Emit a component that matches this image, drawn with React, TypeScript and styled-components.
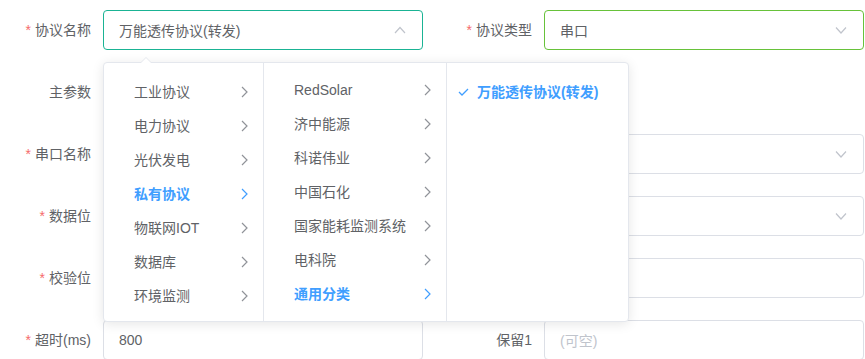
import React from 'react';
import styled, { createGlobalStyle } from 'styled-components';

interface Field {
  label: string;
  required?: boolean;
  value?: string;
  placeholder?: string;
  select?: boolean;
  open?: boolean;
  accent?: string;
  empty?: boolean;
}

const fields: Field[] = [
  { label: '协议名称', required: true, value: '万能透传协议(转发)', select: true, open: true, accent: '#1ab394' },
  { label: '协议类型', required: true, value: '串口', select: true, accent: '#67c23a' },
  { label: '主参数', empty: true },
  { label: '', empty: true },
  { label: '串口名称', required: true, select: true },
  { label: '波特率', required: true, select: true },
  { label: '数据位', required: true, select: true },
  { label: '停止位', required: true, select: true },
  { label: '校验位', required: true, select: true },
  { label: '地址', required: true },
  { label: '超时(ms)', required: true, value: '800' },
  { label: '保留1', placeholder: '(可空)' },
];

const level1 = ['工业协议', '电力协议', '光伏发电', '私有协议', '物联网IOT', '数据库', '环境监测'];
const level2 = ['RedSolar', '济中能源', '科诺伟业', '中国石化', '国家能耗监测系统', '电科院', '通用分类'];

function Chevron(props: { dir: 'up' | 'down' | 'right'; color?: string }) {
  const color = props.color || '#c0c4cc';
  if (props.dir === 'right') {
    return (
      <svg width='7' height='12' viewBox='0 0 7 12'>
        <polyline points='1,1 6,6 1,11' fill='none' stroke={color} strokeWidth='1.2' />
      </svg>
    );
  }
  const pts = props.dir === 'up' ? '1,7 6,1.5 11,7' : '1,1.5 6,7 11,1.5';
  return (
    <svg width='12' height='8' viewBox='0 0 12 8'>
      <polyline points={pts} fill='none' stroke={color} strokeWidth='1.2' />
    </svg>
  );
}

function App() {
  return (
    <Page>
      <GlobalStyle />
      <Form>
        {fields.map(function (f, i) {
          return (
            <FormItem key={i}>
              <Label>
                {f.required && <Star>*</Star>}
                {f.label}
              </Label>
              {!f.empty && (
                <InputBox accent={f.accent}>
                  {f.value ? <Value>{f.value}</Value> : <Placeholder>{f.placeholder}</Placeholder>}
                  {f.select && (
                    <Suffix>
                      <Chevron dir={f.open ? 'up' : 'down'} />
                    </Suffix>
                  )}
                </InputBox>
              )}
            </FormItem>
          );
        })}
      </Form>

      <Popper>
        <Arrow />
        <Menu width={160} offset={12}>
          {level1.map(function (t, i) {
            const active = i === 3;
            return (
              <Node key={t} active={active}>
                <span>{t}</span>
                <Postfix>
                  <Chevron dir='right' color={active ? '#409eff' : '#909399'} />
                </Postfix>
              </Node>
            );
          })}
        </Menu>
        <Menu width={183} offset={10}>
          {level2.map(function (t, i) {
            const active = i === 6;
            return (
              <Node key={t} active={active}>
                <span>{t}</span>
                <Postfix>
                  <Chevron dir='right' color={active ? '#409eff' : '#909399'} />
                </Postfix>
              </Node>
            );
          })}
        </Menu>
        <Menu width={181} offset={12} last>
          <Node active>
            <Check>
              <svg width='11' height='8' viewBox='0 0 11 8'>
                <polyline points='1,4 4,7 10,1' fill='none' stroke='#409eff' strokeWidth='1.3' />
              </svg>
            </Check>
            <span>万能透传协议(转发)</span>
          </Node>
        </Menu>
      </Popper>
    </Page>
  );
}

export default App;

const GlobalStyle = createGlobalStyle({
  body: {
    margin: 0,
    background: '#ffffff',
    fontFamily: '"Liberation Sans", "Noto Sans CJK SC", sans-serif',
    fontSize: 14,
    color: '#606266',
  },
});

const Page = styled.div({
  position: 'relative',
  width: 865,
  height: 359,
  overflow: 'hidden',
  paddingTop: 10,
  boxSizing: 'border-box',
});

const Form = styled.div({
  display: 'grid',
  gridTemplateColumns: '423px 423px',
  columnGap: 18,
  rowGap: 22,
});

const FormItem = styled.div({
  display: 'flex',
  height: 40,
});

const Label = styled.label({
  width: 103,
  flexShrink: 0,
  paddingRight: 12,
  boxSizing: 'border-box',
  textAlign: 'right',
  lineHeight: '40px',
  color: '#606266',
  whiteSpace: 'nowrap',
});

const Star = styled.span({
  color: '#f56c6c',
  marginRight: 4,
});

const InputBox = styled.div<{ accent?: string }>((p) => ({
  position: 'relative',
  width: 320,
  height: 40,
  boxSizing: 'border-box',
  border: `1px solid ${p.accent || '#dcdfe6'}`,
  borderRadius: 4,
  padding: '0 15px',
  display: 'flex',
  alignItems: 'center',
}));

const Value = styled.span({
  color: '#606266',
});

const Placeholder = styled.span({
  color: '#c0c4cc',
});

const Suffix = styled.span({
  marginLeft: 'auto',
  marginRight: 1,
  display: 'flex',
});

const Popper = styled.div({
  position: 'absolute',
  left: 103,
  top: 62,
  display: 'flex',
  height: 260,
  boxSizing: 'border-box',
  background: '#ffffff',
  border: '1px solid #e4e7ed',
  borderRadius: 4,
  boxShadow: '0 2px 12px 0 rgba(0, 0, 0, 0.1)',
});

const Arrow = styled.div({
  position: 'absolute',
  top: -6,
  left: 36,
  width: 0,
  height: 0,
  borderLeft: '6px solid transparent',
  borderRight: '6px solid transparent',
  borderBottom: '6px solid #e4e7ed',
  '&::after': {
    content: '""',
    position: 'absolute',
    left: -5,
    top: 1,
    borderLeft: '5px solid transparent',
    borderRight: '5px solid transparent',
    borderBottom: '5px solid #ffffff',
  },
});

const Menu = styled.div<{ width: number; offset: number; last?: boolean }>((p) => ({
  width: p.width,
  boxSizing: 'border-box',
  paddingTop: p.offset,
  borderRight: p.last ? 'none' : '1px solid #e4e7ed',
}));

const Node = styled.div<{ active?: boolean }>((p) => ({
  position: 'relative',
  height: 34,
  lineHeight: '34px',
  display: 'flex',
  alignItems: 'center',
  padding: '0 15px 0 30px',
  whiteSpace: 'nowrap',
  color: p.active ? '#409eff' : '#606266',
  fontWeight: p.active ? 700 : 400,
}));

const Postfix = styled.span({
  marginLeft: 'auto',
  display: 'flex',
});

const Check = styled.span({
  position: 'absolute',
  left: 11,
  top: 13,
  display: 'flex',
});
